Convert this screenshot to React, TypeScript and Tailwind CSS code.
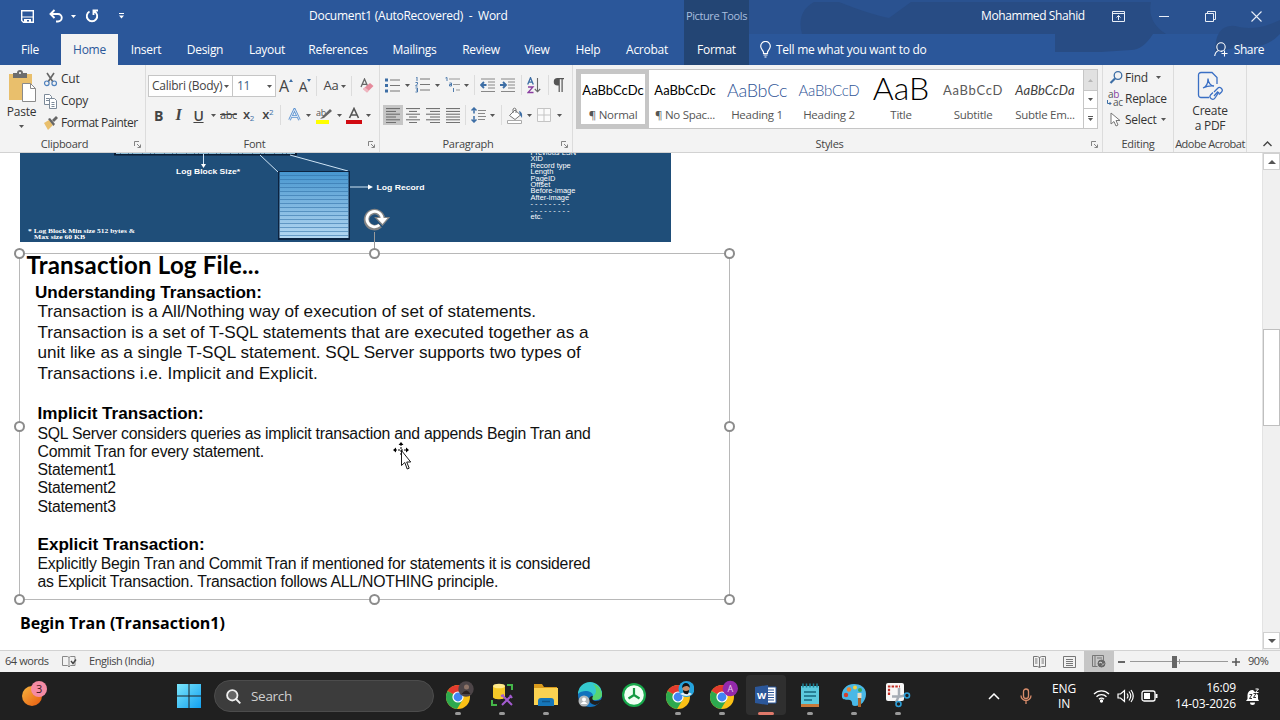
import React from 'react';

const Caret = ({ className = '', fill = '#555' }: { className?: string; fill?: string }) => (
  <svg className={`shrink-0 ${className}`} width="5" height="3" viewBox="0 0 5 3">
    <path d="M0 0h5L2.5 3z" fill={fill} />
  </svg>
);

const Sep = ({ className = '' }: { className?: string }) => (
  <span className={`h-[20px] w-px shrink-0 bg-[#dcdcdc] ${className}`} />
);

const Launcher = () => (
  <svg width="7" height="7" viewBox="0 0 7 7" fill="none" stroke="#777">
    <path d="M.5 5V.5H5M3 3l3 3M6.500 3.500v3h-3" strokeWidth=".9" />
  </svg>
);

const Lines = ({ widths, align = 'left' }: { widths: number[]; align?: 'left' | 'center' | 'right' }) => (
  <svg width="14" height="15" viewBox="0 0 14 15" stroke="#666">
    {widths.map((w, i) => {
      const x = align === 'left' ? 0 : align === 'center' ? (14 - w) / 2 : 14 - w;
      return <path key={i} d={`M${x} ${i * 2.8 + 0.6}h${w}`} />;
    })}
  </svg>
);

function GroupLabel({ children, launcher = true }: { children: React.ReactNode; launcher?: boolean }) {
  return (
    <div className="mt-auto flex h-[16px] w-full items-center text-[11px] text-[#444]">
      <span className="flex-1 text-center whitespace-nowrap">{children}</span>
      {launcher && <span className="flex w-4 justify-center"><Launcher /></span>}
    </div>
  );
}

function TitleBar() {
  return (
    <div className="relative flex h-[34px] items-center pb-[2px] text-[12px] text-white">
      <svg className="ml-[21px]" width="13" height="13" viewBox="0 0 13 13">
        <path d="M.7.700h11.600v11.600H2.500L.7 10.500z" fill="none" stroke="#fff" strokeWidth="1.400" />
        <path d="M1 6.500h11v1H1zM3 9h7v3.500H8V10H6v2.500H3z" fill="#fff" />
      </svg>
      <svg className="ml-[15px]" width="15" height="14" viewBox="0 0 15 14" fill="none" stroke="#fff" strokeWidth="1.900">
        <path d="M1.500 5h7.500a3.700 3.700 0 0 1 0 7.500H7M5.500 1l-4 4 4 4" />
      </svg>
      <Caret className="ml-[7px]" fill="#fff" />
      <svg className="ml-[9px]" width="14" height="14" viewBox="0 0 14 14" fill="none" stroke="#fff" strokeWidth="1.900">
        <path d="M4.500 2.500a5.200 5.200 0 1 0 5 0M8.500 6V1.500H13" />
      </svg>
      <svg className="ml-[20px]" width="5" height="6" viewBox="0 0 5 6" fill="#fff">
        <path d="M0 0h5v1H0zM0 2.500h5L2.500 5.500z" />
      </svg>
      <span className="ml-[185px] w-[375px] whitespace-pre">Document1 (AutoRecovered)  -  Word</span>
      <span className="w-[65px] text-center text-[11px] tracking-[-0.4px] whitespace-nowrap text-[#a9bfdf]">Picture Tools</span>
      <span className="ml-[232px] w-[131px] tracking-[-0.4px] whitespace-nowrap">Mohammed Shahid</span>
      <svg width="13" height="11" viewBox="0 0 13 11" fill="none" stroke="#e8eef7">
        <path d="M.5.500h12v10H.5zM.5 2.500h12M6.500 9V4.500M4.500 6.500l2-2 2 2" />
      </svg>
      <span className="ml-[34px] h-px w-[10px] bg-[#e8eef7]" />
      <svg className="ml-[36px]" width="11" height="11" viewBox="0 0 11 11" fill="none" stroke="#e8eef7">
        <path d="M.5 2.500h8v8h-8zM2.500 2.500v-2h8v8h-2" />
      </svg>
      <svg className="ml-[35px]" width="11" height="11" viewBox="0 0 11 11" fill="none" stroke="#e8eef7" strokeWidth="1.100">
        <path d="M.5.500l10 10M10.500.500l-10 10" />
      </svg>
    </div>
  );
}

function TabBar() {
  return (
    <div className="relative flex h-[31px] items-center text-center text-[12px] text-white">
      <span className="w-[60px]">File</span>
      <span className="ml-px flex h-full w-[57px] items-center justify-center bg-[#f3f3f3] text-[#2b579a]">Home</span>
      <span className="w-[56px]">Insert</span>
      <span className="w-[62px]">Design</span>
      <span className="w-[62px]">Layout</span>
      <span className="w-[80px]">References</span>
      <span className="w-[73px]">Mailings</span>
      <span className="w-[60px]">Review</span>
      <span className="w-[52px]">View</span>
      <span className="w-[50px]">Help</span>
      <span className="w-[68px]">Acrobat</span>
      <span className="ml-[3px] w-[65px]">Format</span>
      <svg className="ml-[11px]" width="11" height="17" viewBox="0 0 11 17" fill="none" stroke="#fff" strokeWidth="1.200">
        <path d="M3.500 12.500V11C3 9.500.7 8 .7 5.200a4.800 4.800 0 0 1 9.600 0C10.300 8 8 9.500 7.500 11v1.500zM3.500 14h4M4.500 16h2" />
      </svg>
      <span className="ml-[5px] whitespace-nowrap">Tell me what you want to do</span>
      <span className="mr-[16px] ml-auto flex items-center gap-[6px] tracking-[-0.4px]">
        <svg width="14" height="15" viewBox="0 0 14 15" fill="none" stroke="#fff" strokeWidth="1.100">
          <circle cx="7" cy="5" r="4.200" />
          <path d="M4.500 8.500C2 9.500 1 11.500.7 14M7 9.500l1.500-.5M10.500 8.500v6M7.500 11.500h6" />
        </svg>
        Share
      </span>
    </div>
  );
}

function Clipboard() {
  return (
    <section className="flex w-[146px] flex-col border-r border-[#dcdcdc]">
      <div className="flex">
        <div className="flex w-[43px] flex-col items-center pt-[5px] text-[12px]">
          <svg width="28" height="33" viewBox="0 0 28 33">
            <path d="M1 4h23v26H1z" fill="#e9bf6c" />
            <path d="M5 3h4a3 3 0 0 1 6 0h4v5H5z" fill="#6d6d6d" />
            <circle cx="12" cy="3" r="1" fill="#fff" />
            <path d="M14.500 13.500h8l5 5v13h-13z" fill="#fff" stroke="#8a8a8a" />
            <path d="M22.500 13.500v5h5" fill="none" stroke="#8a8a8a" />
          </svg>
          <span className="leading-[17px]">Paste</span>
          <Caret className="mt-[5px]" />
        </div>
        <div className="flex flex-col pt-[3px] text-[12px]">
          <div className="flex h-[22px] items-center gap-[3px]">
            <svg width="15" height="15" viewBox="0 0 15 15" fill="none">
              <path d="M4 1l6 9M11 1L5 10" stroke="#666" strokeWidth="1.600" />
              <circle cx="3.800" cy="11.300" r="2.300" stroke="#4f81bd" strokeWidth="1.200" />
              <circle cx="11.200" cy="11.300" r="2.300" stroke="#4f81bd" strokeWidth="1.200" />
            </svg>
            Cut
          </div>
          <div className="flex h-[22px] items-center gap-[3px]">
            <svg width="15" height="15" viewBox="0 0 15 15" fill="#fff" stroke="#7c8a99">
              <path d="M1.500.500h5l2 2v8h-7zM3 4.500h3M3 6.500h3" />
              <path d="M6.500 4.500h5l2 2v8h-7zM8.500 8.500h3M8.500 10.500h3M8.500 12.500h3" />
            </svg>
            Copy
          </div>
          <div className="flex h-[21px] items-center gap-[3px] tracking-[-0.5px] whitespace-nowrap">
            <svg width="15" height="14" viewBox="0 0 15 14">
              <path d="M1 7l5-3 4 5-5 5z" fill="#e9bf6c" />
              <path d="M5 3l2-1 5 6-1.500 2zM9 4l4-4 2 2-4 4z" fill="#666" />
            </svg>
            Format Painter
          </div>
        </div>
      </div>
      <GroupLabel>Clipboard</GroupLabel>
    </section>
  );
}

function FontGroup() {
  return (
    <section className="flex w-[234px] flex-col border-r border-[#dcdcdc] text-[#444]">
      <div className="mt-[10px] flex h-[22px] items-center pl-[2px] text-[12px]">
        <div className="flex h-[22px] w-[85px] items-center justify-between border border-[#c6c6c6] bg-white pr-[3px] pl-[3px] whitespace-nowrap">
          Calibri (Body)
          <Caret />
        </div>
        <div className="flex h-[22px] w-[43px] items-center justify-between border border-l-0 border-[#c6c6c6] bg-white pr-[3px] pl-[4px] text-[#3d6185]">
          11
          <Caret />
        </div>
        <span className="ml-[3px] text-[16px]">A</span>
        <svg className="mb-[11px]" width="4" height="3" viewBox="0 0 4 3"><path d="M0 3h4L2 0z" fill="#3d6ea5" /></svg>
        <span className="ml-[6px] text-[14px]">A</span>
        <svg className="mb-[11px]" width="4" height="3" viewBox="0 0 4 3"><path d="M0 0h4L2 3z" fill="#3d6ea5" /></svg>
        <Sep className="ml-[5px]" />
        <span className="ml-[6px] text-[13px]">Aa</span>
        <Caret className="ml-[3px]" />
        <Sep className="ml-[5px]" />
        <svg className="ml-[8px]" width="14" height="16" viewBox="0 0 14 16">
          <path d="M1 9l3.500-8L8 9M2.300 6.300h4.500" fill="none" stroke="#666" strokeWidth="1.300" />
          <path d="M3 11l7-6 3.500 3-6.500 6.500z" fill="#e58a9b" />
          <path d="M3 11l2-1.500 4 3-2 2z" fill="#f0b7c1" />
        </svg>
      </div>
      <div className="mt-[8px] flex h-[20px] items-center text-[14px]">
        <span className="ml-[7px] w-[11px] text-center font-bold">B</span>
        <span className="ml-[9px] w-[11px] text-center font-['Liberation_Serif'] text-[16px] font-bold italic">I</span>
        <span className="ml-[9px] w-[11px] text-center font-semibold underline">U</span>
        <Caret className="ml-[7px]" />
        <span className="ml-[4px] text-[11px] tracking-[-0.4px] line-through">abc</span>
        <span className="ml-[6px] text-[13px] font-semibold">x<sub className="text-[8px] font-normal text-[#3d6ea5]">2</sub></span>
        <span className="ml-[8px] text-[13px] font-semibold">x<sup className="text-[8px] font-normal text-[#3d6ea5]">2</sup></span>
        <Sep className="ml-[7px]" />
        <svg className="ml-[7px]" width="13" height="14" viewBox="0 0 13 14">
          <path d="M1.500 12L6.500 1.500l5 10.500M3.500 8.500h6" fill="none" stroke="#5b92d0" strokeWidth="2.600" />
          <path d="M1.500 12L6.500 1.500l5 10.500M3.500 8.500h6" fill="none" stroke="#fff" strokeWidth=".8" />
        </svg>
        <Caret className="ml-[5px]" />
        <svg className="ml-[5px]" width="17" height="17" viewBox="0 0 17 17">
          <text x="0" y="8.500" fontSize="9" fill="#555">ab</text>
          <path d="M6 10l8-8 2 2-8 7-4 1z" fill="#666" />
          <path d="M0 13h13v4H0z" fill="#ff0" />
        </svg>
        <Caret className="ml-[4px]" />
        <svg className="ml-[4px]" width="16" height="17" viewBox="0 0 16 17">
          <path d="M3.500 11L8 1.500 12.500 11M5 8h6" fill="none" stroke="#555" strokeWidth="1.600" />
          <path d="M0 13h16v4H0z" fill="#d10a11" />
        </svg>
        <Caret className="ml-[4px]" />
      </div>
      <GroupLabel>Font</GroupLabel>
    </section>
  );
}

function Paragraph() {
  return (
    <section className="flex w-[193px] flex-col border-r border-[#dcdcdc] text-[#444]">
      <div className="mt-[9px] flex h-[22px] items-center">
        <svg className="ml-[5px]" width="16" height="15" viewBox="0 0 16 15">
          <path d="M5 2h10M5 7.500h10M5 13h10" stroke="#777" />
          <path d="M0 .5h3v3H0zM0 6h3v3H0zM0 11.500h3v3H0z" fill="#3d6ea5" />
        </svg>
        <Caret className="ml-[4px]" />
        <svg className="ml-[5px]" width="16" height="16" viewBox="0 0 16 16">
          <path d="M5 2h10M5 7.500h10M5 13h10" stroke="#777" />
          <path d="M1 0h1v4M.5 5.500h2v1.500l-2 2h2M.5 11h2v4h-2M1 13h1.500" fill="none" stroke="#3d6ea5" strokeWidth=".9" />
        </svg>
        <Caret className="ml-[4px]" />
        <svg className="ml-[5px]" width="16" height="16" viewBox="0 0 16 16">
          <path d="M4 2h11M8 7.500h7M11 13h4" stroke="#999" />
          <path d="M.5 1L2 .5V4M4.500 6h2v3h-2V7.500h2M8.500 11v4" fill="none" stroke="#3d6ea5" strokeWidth=".9" />
        </svg>
        <Caret className="ml-[3px]" />
        <Sep className="ml-[5px]" />
        <svg className="ml-[5px]" width="16" height="15" viewBox="0 0 16 15">
          <path d="M1 1h14M8 4h7M8 7h7M8 10h7M1 13.500h14" stroke="#888" />
          <path d="M6.500 7H1.500M4 4L1 7l3 3" fill="none" stroke="#3d6ea5" strokeWidth="1.800" />
        </svg>
        <svg className="ml-[4px]" width="16" height="15" viewBox="0 0 16 15">
          <path d="M1 1h14M8 4h7M8 7h7M8 10h7M1 13.500h14" stroke="#888" />
          <path d="M0 7h5M3 4l3 3-3 3" fill="none" stroke="#3d6ea5" strokeWidth="1.800" />
        </svg>
        <Sep className="ml-[5px]" />
        <svg className="ml-[5px]" width="14" height="17" viewBox="0 0 14 17" fill="none" strokeWidth="1.300">
          <path d="M.7 7.500L3.500.700l2.800 6.800M1.700 5.200h3.600" stroke="#3d6ea5" />
          <path d="M1 10h5l-5 5.500h5.500" stroke="#8a3fa0" />
          <path d="M10.500 1v13.500M7.800 12l2.700 2.800L13.200 12" stroke="#666" strokeWidth="1.100" />
        </svg>
        <Sep className="ml-[7px]" />
        <svg className="ml-[4px]" width="11" height="14" viewBox="0 0 11 14" fill="#555">
          <path d="M4.500 0H11v1.200H9.700V14H8.500V1.200H6.800V14H5.600V7.500H4.500a3.700 3.700 0 0 1 0-7.500z" />
        </svg>
      </div>
      <div className="mt-[9px] flex h-[20px] items-center">
        <span className="ml-[3px] flex h-[20px] w-[20px] items-center justify-center bg-[#c6c6c6]"><Lines widths={[14, 10, 14, 10, 14, 10]} /></span>
        <span className="flex w-[20px] justify-center"><Lines widths={[14, 8, 14, 8, 14, 8]} align="center" /></span>
        <span className="flex w-[20px] justify-center"><Lines widths={[14, 10, 14, 10, 14, 10]} align="right" /></span>
        <span className="flex w-[20px] justify-center"><Lines widths={[14, 14, 14, 14, 14, 14]} /></span>
        <Sep className="ml-[2px]" />
        <svg className="ml-[5px]" width="16" height="16" viewBox="0 0 16 16" fill="none">
          <path d="M7 3.500h8M7 6.500h7M7 9.500h8M7 12.500h7" stroke="#888" />
          <path d="M3 1v5.500M3 9v6M.5 3.500L3 1l2.500 2.500M.5 12.500L3 15l2.500-2.500" stroke="#3d6ea5" strokeWidth="1.500" />
        </svg>
        <Caret className="ml-[3px]" />
        <Sep className="ml-[6px]" />
        <svg className="ml-[5px]" width="17" height="17" viewBox="0 0 17 17">
          <path d="M2.500 8.500L8 3l5.500 5L8 12.500zM6 6V2a2 2 0 0 1 3 0v4" fill="#fff" stroke="#777" />
          <path d="M12 4q4 1 3 7l-2-3z" fill="#3d6ea5" />
          <path d="M.5 13.500h14v3H.5z" fill="#fff" stroke="#aaa" />
        </svg>
        <Caret className="ml-[3px]" />
        <svg className="ml-[5px]" width="15" height="15" viewBox="0 0 15 15" fill="#fafafa" stroke="#c4c4c4">
          <path d="M.5.500h13v13H.5zM7 .5v13M.5 7h13" />
        </svg>
        <Caret className="ml-[5px]" />
      </div>
      <GroupLabel>Paragraph</GroupLabel>
    </section>
  );
}

const styles = [
  { name: '¶ Normal', sample: 'AaBbCcDc', look: "font-['Lato'] text-[13px] text-black tracking-[0px]" },
  { name: '¶ No Spac...', sample: 'AaBbCcDc', look: "font-['Lato'] text-[13px] text-black tracking-[0px]" },
  { name: 'Heading 1', sample: 'AaBbCc', look: "font-['Lato'] font-light text-[18px] text-[#2f5496]" },
  { name: 'Heading 2', sample: 'AaBbCcD', look: "font-['Lato'] font-light text-[15px] text-[#2f5496]" },
  { name: 'Title', sample: 'AaB', look: "font-['Lato'] font-light text-[32px] leading-[26px] text-black pb-[6px] tracking-[0px]" },
  { name: 'Subtitle', sample: 'AaBbCcD', look: "font-['Lato'] text-[13px] text-[#5a5a5a] tracking-[0.7px]" },
  { name: 'Subtle Em...', sample: 'AaBbCcDa', look: "font-['Lato'] italic text-[13px] text-[#404040] tracking-[0.1px]" },
];

function Styles() {
  return (
    <section className="flex w-[530px] flex-col border-r border-[#dcdcdc]">
      <div className="mt-[4px] ml-[3px] flex h-[60px] w-[522px] border border-[#c6c6c6] bg-white">
        {styles.map((s, i) => (
          <div key={s.name} className={`flex w-[72px] shrink-0 flex-col items-center border-4 ${i === 0 ? 'border-[#c6c6c6]' : 'border-transparent'}`}>
            <div className={`flex h-[33px] w-[64px] items-center justify-center whitespace-nowrap ${s.look}`}>{s.sample}</div>
            <div className="-mx-1 text-[11.500px] leading-[16px] whitespace-nowrap text-[#555]">{s.name}</div>
          </div>
        ))}
        <div className="ml-auto flex w-[14px] flex-col border-l border-[#c6c6c6]">
          <span className="flex h-[20px] items-center justify-center bg-[#e1e1e1]"><Caret className="rotate-180" fill="#b5b5b5" /></span>
          <span className="flex h-[19px] items-center justify-center border-y border-[#c6c6c6]"><Caret /></span>
          <span className="flex flex-1 flex-col items-center justify-center gap-px"><span className="h-px w-[5px] bg-[#555]" /><Caret /></span>
        </div>
      </div>
      <GroupLabel>Styles</GroupLabel>
    </section>
  );
}

function Editing() {
  return (
    <section className="flex w-[71px] flex-col border-r border-[#dcdcdc] pt-[2px] text-[12px]">
      <div className="flex h-[21px] items-center pl-[6px]">
        <svg width="14" height="13" viewBox="0 0 14 13" fill="none" stroke="#3d6ea5">
          <circle cx="9" cy="4.500" r="3.800" strokeWidth="1.300" />
          <path d="M6 7.500L1.500 12" strokeWidth="2.200" />
        </svg>
        <span className="ml-[2px]">Find</span>
        <Caret className="ml-[8px]" />
      </div>
      <div className="flex h-[21px] items-center pl-[4px]">
        <div className="relative flex h-[18px] w-[17px] flex-col pl-px text-[10px] leading-[8px] text-[#555]">
          <span>a<span className="text-[#8a3fa0]">b</span></span>
          <span className="pl-[5px]">ac</span>
          <svg className="absolute bottom-[2px] left-0" width="5" height="6" viewBox="0 0 5 6" fill="none" stroke="#3d6ea5">
            <path d="M.5 0v3.500h3.500M2.500 2L4 3.500 2.500 5" />
          </svg>
        </div>
        <span className="ml-px">Replace</span>
      </div>
      <div className="flex h-[21px] items-center pl-[7px]">
        <svg width="12" height="15" viewBox="0 0 12 15" fill="#fff" stroke="#777">
          <path d="M1 1v11l3-2.500L6 14l2-1-2-4.500h4z" />
        </svg>
        <span className="ml-[3px]">Select</span>
        <Caret className="ml-[4px]" />
      </div>
      <GroupLabel launcher={false}>Editing</GroupLabel>
    </section>
  );
}

function Acrobat() {
  return (
    <section className="flex w-[73px] flex-col items-center border-r border-[#dcdcdc] pt-[6px] text-[12px] leading-[15px]">
      <svg width="27" height="30" viewBox="0 0 27 30" fill="none" stroke="#3a6fc4" strokeWidth="1.300">
        <path d="M12 26.500H4a2.500 2.500 0 0 1-2.500-2.500V4A2.500 2.500 0 0 1 4 1.500h11l5 5V13" />
        <path d="M6 17c3-1 5-5 5-9.500 0 4.500 3 7.500 6 7.500-4-.5-8 .5-11 2z" />
        <path d="M17 21l3.500-3.500a2.600 2.600 0 0 1 4 3.500L22 23.500M22 21l-4 6a2.600 2.600 0 0 1-4.500-3l2.500-2.500M17 25l4-4.500" />
      </svg>
      <span className="mt-[2px]">Create</span>
      <span>a PDF</span>
      <span className="mt-auto flex h-[17px] items-center text-[11px] tracking-[-0.5px] whitespace-nowrap text-[#444]">Adobe Acrobat</span>
    </section>
  );
}

function Ribbon() {
  return (
    <div className="flex h-[88px] border-b border-[#d2d2d2] bg-[#f3f3f3] text-[#333]">
      <Clipboard />
      <FontGroup />
      <Paragraph />
      <Styles />
      <Editing />
      <Acrobat />
      <svg className="mt-auto mb-[5px] ml-[16px]" width="9" height="6" viewBox="0 0 9 6" fill="none" stroke="#444" strokeWidth="1.400">
        <path d="M.5 5l4-4 4 4" />
      </svg>
    </div>
  );
}

const recordFields = ['Previous LSN', 'XID', 'Record type', 'Length', 'PageID', 'Offset', 'Before-image', 'After-image', '- - - - - - - - -', '- - - - - - - - -', 'etc.'];

function LogDiagram() {
  return (
    <svg className="ml-[20px] block shrink-0 bg-[#1f4e79] tracking-normal" width="651" height="89" viewBox="20 153 651 89" fontFamily="Liberation Sans" fill="#fff">
      <path d="M114 150h183v5.500H114z" fill="#0b1c33" />
      <path d="M116 150h179v4H116z" fill="#8fc1dc" />
      <path d="M120 153h170" stroke="#1d3d60" strokeDasharray="1 7 1 3 1 9" />
      <path d="M203.500 154v12M260 155l18 17M290 155l58 16M349 187h20" stroke="#cfe4f5" fill="none" />
      <path d="M201 164h5l-2.500 4zM368 184.500v5l5-2.500z" />
      <path d="M278 171h72v69h-72z" fill="#0c2340" />
      <linearGradient id="record" x1="0" y1="0" x2="0" y2="1">
        <stop offset="0" stopColor="#4796cf" />
        <stop offset="1" stopColor="#b5d8f2" />
      </linearGradient>
      <path d="M279.500 172h69v66h-69z" fill="url(#record)" />
      {Array.from({ length: 16 }, (_, i) => (
        <path key={i} d={`M279.500 ${175.5 + i * 4}h69`} stroke="#2f6fa6" opacity=".55" />
      ))}
      <text x="176" y="174" fontSize="7" fontWeight="bold" textLength="64" lengthAdjust="spacingAndGlyphs">Log Block Size*</text>
      <text x="376.500" y="189.500" fontSize="7" fontWeight="bold" textLength="48" lengthAdjust="spacingAndGlyphs">Log Record</text>
      <g fontFamily="Liberation Serif" fontSize="6.500" fontWeight="bold">
        <text x="28" y="233" textLength="107" lengthAdjust="spacingAndGlyphs">* Log Block Min size 512 bytes &amp;</text>
        <text x="34" y="239" textLength="51" lengthAdjust="spacingAndGlyphs">Max size 60 KB</text>
      </g>
      <g fontSize="6.500" transform="translate(530.500 155) scale(1.15 1)">
        {recordFields.map((f, i) => (
          <text key={i} x="0" y={i * 6.4}>{f}</text>
        ))}
      </g>
    </svg>
  );
}

const handles = [
  'left-[-6px] top-[-6px]', 'left-[349px] top-[-6px]', 'left-[704px] top-[-6px]',
  'left-[-6px] top-[167px]', 'left-[704px] top-[167px]',
  'left-[-6px] top-[340px]', 'left-[349px] top-[340px]', 'left-[704px] top-[340px]',
];

function SelectedPicture() {
  return (
    <div className="relative mt-[11px] ml-[19px] h-[347px] w-[711px] border border-[#b8b8b8] pl-[17.500px] font-['Liberation_Sans'] tracking-normal whitespace-nowrap text-[#111]">
      <h1 className="-ml-[11px] h-[29px] font-['Lato'] text-[24px] leading-[21px] font-bold tracking-[0.200px] text-black">Transaction Log File...</h1>
      <h2 className="-ml-[2.500px] text-[17.100px] leading-[19px] font-bold text-black">Understanding Transaction:</h2>
      <div className="-mt-px text-[17.150px] leading-[20.500px]">
        <p>Transaction is a All/Nothing way of execution of set of statements.</p>
        <p>Transaction is a set of T-SQL statements that are executed together as a</p>
        <p>unit like as a single T-SQL statement. SQL Server supports two types of</p>
        <p>Transactions i.e. Implicit and Explicit.</p>
      </div>
      <h2 className="mt-[21px] text-[17.100px] leading-[20px] font-bold text-black">Implicit Transaction:</h2>
      <div className="mt-[0.500px] text-[15.800px] leading-[18.300px] tracking-[-0.250px]">
        <p>SQL Server considers queries as implicit transaction and appends Begin Tran and</p>
        <p>Commit Tran for every statement.</p>
        <p>Statement1</p>
        <p>Statement2</p>
        <p>Statement3</p>
      </div>
      <h2 className="mt-[19px] text-[17.100px] leading-[20px] font-bold text-black">Explicit Transaction:</h2>
      <div className="text-[15.800px] leading-[18.300px] tracking-[-0.240px]">
        <p>Explicitly Begin Tran and Commit Tran if mentioned for statements it is considered</p>
        <p>as Explicit Transaction. Transaction follows ALL/NOTHING principle.</p>
      </div>

      <span className="absolute top-[-22px] left-[354px] h-[18px] w-px bg-[#9a9a9a]" />
      {handles.map((pos) => (
        <span key={pos} className={`absolute h-[11px] w-[11px] rounded-full border-2 border-[#8c8c8c] bg-white ${pos}`} />
      ))}
      <svg className="absolute top-[-47px] left-[343px]" width="27" height="24" viewBox="0 0 27 24" fill="none">
        <path d="M17 18.500a8 8 0 1 1 2.500-7" stroke="#858585" strokeWidth="5.500" />
        <path d="M12.500 10.500h13.500l-6.500 7.500z" fill="#fff" stroke="#858585" strokeWidth="1.200" />
        <path d="M16.500 18a7.700 7.700 0 1 1 2.800-6" stroke="#fff" strokeWidth="2.800" />
      </svg>
      <svg className="absolute top-[188px] left-[372px]" width="20" height="30" viewBox="0 0 20 30">
        <path d="M9 2v12M3 8h12" stroke="#000" strokeDasharray="2 1" />
        <path d="M9 0l2.500 3h-5zM1 8l3-2.500v5zM17 8l-3-2.500v5z" />
        <path d="M9.500 8.500v15l3.300-3 2.400 6.500 2-.8-2.500-6.200h4z" fill="#fff" stroke="#000" strokeWidth=".9" />
      </svg>
    </div>
  );
}

function ScrollBar() {
  return (
    <div className="flex w-[18px] flex-col border-l border-[#e3e3e3] bg-[#f0f0f0]">
      <span className="flex h-[17px] items-center justify-center border border-[#d0d0d0] bg-white">
        <svg width="8" height="4" viewBox="0 0 8 4" fill="#555"><path d="M0 4h8L4 0z" /></svg>
      </span>
      <span className="mt-[159px] h-[97px] border border-[#bfbfbf] bg-white" />
      <span className="mt-auto mb-px flex h-[17px] items-center justify-center border border-[#d0d0d0] bg-white">
        <svg width="8" height="4" viewBox="0 0 8 4" fill="#555"><path d="M0 0h8L4 4z" /></svg>
      </span>
    </div>
  );
}

function StatusBar() {
  return (
    <div className="flex h-[22px] items-center border-t border-[#d2d2d2] bg-[#f2f2f2] text-[11px] tracking-[-0.42px] whitespace-nowrap text-[#444]">
      <span className="ml-[5px] w-[57px]">64 words</span>
      <svg width="15" height="13" viewBox="0 0 15 13" fill="none" stroke="#888">
        <path d="M.5 1.500h5l1.500 1 1.500-1H13v9H8.500L7 12l-1.500-1.500h-5zM7 2.500V12" />
        <path d="M9 6l2 2.500 3-4" stroke="#444" strokeWidth="1.400" />
      </svg>
      <span className="ml-[12px]">English (India)</span>
      <svg className="ml-auto" width="13" height="12" viewBox="0 0 13 12" fill="none" stroke="#777">
        <path d="M.5.500h4l2 1 2-1h4v10h-4l-2 1-2-1h-4zM6.500 1.500v10M2 3h2.500M2 5h2.500M2 7h2.500M8.500 3H11M8.500 5H11M8.500 7H11" />
      </svg>
      <svg className="ml-[17px]" width="13" height="12" viewBox="0 0 13 12" fill="none" stroke="#777">
        <path d="M.5.500h12v11H.5zM3 3.500h7M3 5.500h7M3 7.500h7M3 9.500h7" />
      </svg>
      <span className="ml-[8px] flex h-full w-[30px] items-center justify-center bg-[#c6c6c6]">
        <svg width="14" height="13" viewBox="0 0 14 13" fill="none" stroke="#777">
          <path d="M11.500 5V.500H.5v11h5M3 .5v11M5 3h5" />
          <circle cx="9.500" cy="8.500" r="3.500" fill="#666" stroke="#666" />
          <path d="M7 8l2-1 1 1.500M10 10.500l2-2" stroke="#ddd" />
        </svg>
      </span>
      <span className="ml-[4px] h-[2px] w-[7px] bg-[#666]" />
      <span className="ml-[5px] flex w-[98px] items-center">
        <span className="h-px w-[42px] bg-[#999]" />
        <span className="h-[12px] w-[5px] bg-[#666]" />
        <span className="h-px w-[2px] bg-[#999]" />
        <span className="h-[5px] w-px bg-[#999]" />
        <span className="h-px flex-1 bg-[#999]" />
      </span>
      <svg className="ml-[4px]" width="8" height="8" viewBox="0 0 8 8" stroke="#555" strokeWidth="1.500"><path d="M4 0v8M0 4h8" /></svg>
      <span className="mr-[11px] ml-[8px] w-[21px]">90%</span>
    </div>
  );
}

function Chrome({ badge }: { badge: React.ReactNode }) {
  return (
    <svg width="32" height="30" viewBox="-1.500 0 32 30">
      <circle cx="14.500" cy="17" r="12" fill="#fbc116" />
      <path d="M14.500 17L4.100 11A12 12 0 0 1 24.900 11z" fill="#e33b2e" />
      <path d="M14.500 17L4.100 11A12 12 0 0 0 13.500 29l5.500-9z" fill="#2da94f" />
      <circle cx="14.500" cy="17" r="5.600" fill="#fff" />
      <circle cx="14.500" cy="17" r="4.400" fill="#4285f4" />
      {badge}
    </svg>
  );
}

const apps = [
  {
    id: 'chrome-photo',
    icon: (
      <Chrome badge={<g><circle cx="22.500" cy="9" r="7.700" fill="#4d4548" /><circle cx="23" cy="7" r="2.500" fill="#8e7468" /><path d="M18 14q5-7 9 0z" fill="#2a2022" /></g>} />
    ),
  },
  {
    id: 'ssms',
    icon: (
      <svg width="26" height="26" viewBox="0 0 26 26" fill="none">
        <path d="M4 4v11c0 3 12 3 12 0V4z" fill="#f5c928" />
        <ellipse cx="10" cy="4" rx="6" ry="2.300" fill="#ffe98a" />
        <path d="M18 3h5v5M3 18v5h5" stroke="#45b649" strokeWidth="2" />
        <path d="M14 14l9 9M22 14l-9 9M12 14l3-1M21 13l2 3" stroke="#a35bd0" strokeWidth="2" />
      </svg>
    ),
  },
  {
    id: 'explorer',
    icon: (
      <svg width="26" height="24" viewBox="0 0 26 24">
        <path d="M1 1h8l2 3h13v8H1z" fill="#d99a1c" />
        <path d="M1 5h24v17H1z" fill="#fbd251" />
        <path d="M5 23v-5a3 3 0 0 1 3-3h10a3 3 0 0 1 3 3v5z" fill="#1676b9" />
        <path d="M9 18.500h8" stroke="#0f558a" strokeWidth="1.500" />
      </svg>
    ),
  },
  {
    id: 'edge',
    icon: (
      <svg width="26" height="26" viewBox="0 0 26 26">
        <circle cx="13" cy="13" r="12" fill="#1272bd" />
        <path d="M1 12A12 12 0 0 1 25 12c0 5-4 6-8 6-3 0-2-2-1-4 0-5-10-7-15-2z" fill="#35c9cf" />
        <path d="M16 2a12 12 0 0 1 9 10c0 5-4 6-8 6-3 0-2-2-1-4 4-2 4-8 0-12z" fill="#58d46f" />
        <path d="M25 17c-4 3-12 3-9-3-6 0-5 8 2 9q5-1 7-6z" fill="#202020" />
        <circle cx="7" cy="19" r="5.500" fill="#b4b8bb" />
        <circle cx="7" cy="17.500" r="2" fill="#fff" />
        <path d="M3.500 22q3.500-5 7 0z" fill="#fff" />
      </svg>
    ),
  },
  {
    id: 'clockify',
    icon: (
      <svg width="26" height="26" viewBox="0 0 26 26">
        <circle cx="13" cy="13" r="12" fill="#17a84b" />
        <circle cx="13" cy="13" r="9.800" fill="#effff3" />
        <path d="M13 6v7.500M13 13l-5.500 3.500M13 13l5.500 3.500" stroke="#159a43" strokeWidth="2.200" />
      </svg>
    ),
  },
  {
    id: 'chrome-man',
    icon: (
      <Chrome badge={<g><circle cx="23" cy="9" r="8" fill="#25a3dd" /><path d="M16.500 14q6-4 12 0-5 4-12 0z" fill="#e5eef5" /><circle cx="22.500" cy="8.500" r="3.500" fill="#c78b68" /><path d="M18.500 8c0-7 8-6 8 0-3-3-5-2-8 0zM19.500 10q3 2 6 0 0 5-3 4-3 0-3-4z" fill="#141414" /></g>} />
    ),
  },
  {
    id: 'chrome-a',
    icon: (
      <Chrome badge={<g><circle cx="22.800" cy="8.500" r="7.700" fill="#9329ab" /><text x="22.800" y="12" textAnchor="middle" fontSize="9" fill="#e9cdef">A</text></g>} />
    ),
  },
  {
    id: 'word',
    icon: (
      <svg width="22" height="22" viewBox="0 0 22 22">
        <path d="M11 3h10v16H11z" fill="#fff" stroke="#2b579a" />
        <path d="M13 6h6M13 8.500h6M13 11h6M13 13.500h6M13 16h6" stroke="#2b579a" />
        <path d="M0 3l13-2v20L0 19z" fill="#2b579a" />
        <text x="6.500" y="14.500" textAnchor="middle" fontSize="9.500" fontWeight="bold" fill="#fff">W</text>
      </svg>
    ),
  },
  {
    id: 'notepad',
    icon: (
      <svg width="22" height="26" viewBox="0 0 22 26">
        <path d="M2 4h18v20H2z" fill="#5cc9dd" />
        <path d="M2 22h18v3H2z" fill="#c8793a" />
        <path d="M5 10h12M5 14h12M5 18h8" stroke="#17677d" strokeWidth="1.500" />
        <path d="M4 1.500v4M7.500 1.500v4M11 1.500v4M14.500 1.500v4M18 1.500v4" stroke="#1d8398" strokeWidth="1.500" />
      </svg>
    ),
  },
  {
    id: 'paint',
    icon: (
      <svg width="26" height="26" viewBox="0 0 26 26">
        <path d="M13 2C5 2 0 8 1 15c1 4 5 2 8 3 4 2 0 6 5 6 6 0 11-5 11-12S19 2 13 2z" fill="#49b8e6" />
        <circle cx="5" cy="13" r="2.200" fill="#d33f2c" />
        <circle cx="8" cy="7.500" r="2.200" fill="#f0802e" />
        <circle cx="14" cy="5.500" r="2" fill="#f6d13f" />
        <circle cx="19" cy="8" r="2" fill="#3aa655" />
        <path d="M16.500 11h4v5h-4z" fill="#eadcc4" />
        <path d="M17 16h3v9h-3z" fill="#a8642b" />
      </svg>
    ),
  },
  {
    id: 'snip',
    icon: (
      <svg width="26" height="26" viewBox="0 0 26 26" fill="none">
        <rect x="1" y="1" width="18" height="18" rx="2" fill="#f7f7f7" />
        <path d="M4 13V4.500h11" stroke="#c22e25" strokeWidth="2.200" strokeDasharray="2.500 1.200" />
        <path d="M14 6v8l-3 6M7 14.500h8l5-1" stroke="#a6adb5" strokeWidth="2.500" />
        <circle cx="22" cy="13.500" r="2.500" stroke="#2d9fd8" strokeWidth="1.600" />
        <circle cx="13.500" cy="22" r="2.500" stroke="#2d9fd8" strokeWidth="1.600" />
      </svg>
    ),
  },
];

function TaskBar() {
  return (
    <div className="flex h-[48px] items-center bg-[#202020] text-[12px] tracking-[-0.15px] text-white">
      <svg className="ml-[21px]" width="27" height="30" viewBox="0 0 27 30">
        <linearGradient id="sun" x1="0" y1="0" x2="1" y2="1">
          <stop offset="0" stopColor="#f8b63f" />
          <stop offset="1" stopColor="#e6590f" />
        </linearGradient>
        <circle cx="11" cy="15" r="10" fill="url(#sun)" />
        <circle cx="18" cy="8" r="8" fill="#f48ba4" />
        <text x="18" y="12" textAnchor="middle" fontSize="11" fill="#3a1520">3</text>
      </svg>
      <svg className="ml-[129px]" width="24" height="24" viewBox="0 0 24 24">
        <linearGradient id="win" x1="0" y1="0" x2="1" y2="1">
          <stop offset="0" stopColor="#7be6fb" />
          <stop offset="1" stopColor="#12a0f0" />
        </linearGradient>
        <path d="M0 0h11.500v11.500H0zM12.500 0H24v11.500H12.500zM0 12.500h11.500V24H0zM12.500 12.500H24V24H12.500z" fill="url(#win)" />
      </svg>
      <div className="ml-[13px] flex h-[32px] w-[220px] items-center rounded-full border border-[#4c4c4c] bg-[#3c3c3c] text-[13.500px] tracking-[-0.3px] text-[#d0d0d0]">
        <svg className="ml-[11px]" width="15" height="15" viewBox="0 0 15 15" fill="#666" stroke="#f0f0f0" strokeWidth="1.800">
          <circle cx="6.300" cy="6.300" r="5.200" />
          <path d="M10 10l4.300 4.300" />
        </svg>
        <span className="ml-[10px]">Search</span>
      </div>
      <div className="ml-[2px] flex h-full items-center">
        {apps.map((app) => (
          <div key={app.id} className="flex h-full w-[44px] flex-col items-center">
            <span className={`mt-[3px] flex h-[40px] w-[40px] items-center justify-center rounded ${app.id === 'word' ? 'bg-[#2f2f2f]' : ''}`}>{app.icon}</span>
            {app.id === 'word' ? (
              <span className="-mt-[3px] h-[3px] w-[16px] rounded-full bg-[#e0796a]" />
            ) : (
              <span className={`-mt-[3px] h-[3px] w-[6px] rounded-full ${app.id === 'edge' || app.id === 'clockify' ? '' : 'bg-[#999]'}`} />
            )}
          </div>
        ))}
      </div>
      <svg className="ml-auto" width="12" height="7" viewBox="0 0 12 7" fill="none" stroke="#fff" strokeWidth="1.500">
        <path d="M1 6l5-5 5 5" />
      </svg>
      <svg className="ml-[20px]" width="12" height="17" viewBox="0 0 12 17" fill="none" stroke="#d98d6b" strokeWidth="1.300">
        <rect x="3.500" y="1" width="5" height="9.500" rx="2.500" />
        <path d="M1 7.500a5 5 0 0 0 10 0M6 12.500V16" />
      </svg>
      <span className="ml-[17px] w-[30px] text-center leading-[15px]">ENG<br />IN</span>
      <svg className="ml-[14px]" width="17" height="14" viewBox="0 0 17 14" fill="none" stroke="#fff" strokeWidth="1.300">
        <path d="M1 5a10.500 10.500 0 0 1 15 0M3.500 7.700a7 7 0 0 1 10 0M6 10.200a3.500 3.500 0 0 1 5 0" />
        <circle cx="8.500" cy="12" r="1" fill="#fff" />
      </svg>
      <svg className="ml-[7px]" width="17" height="14" viewBox="0 0 17 14" fill="none" stroke="#fff" strokeWidth="1.200">
        <path d="M1 5v4h2.500l4 3.500v-11L3.500 5zM10 4.500q2 2.500 0 5M12 2.500q3.500 4.500 0 9M14 1q4.500 6 0 12" />
      </svg>
      <svg className="ml-[7px]" width="17" height="12" viewBox="0 0 17 12" fill="none" stroke="#fff" strokeWidth="1.300">
        <rect x="1" y="1" width="13" height="10" rx="2" />
        <path d="M3 3h6v6H3z" fill="#fff" stroke="none" />
        <path d="M15.500 4v4" strokeWidth="2" />
      </svg>
      <span className="ml-[10px] w-[68px] text-right leading-[16px] whitespace-nowrap">16:09<br />14-03-2026</span>
      <svg className="mr-[20px] ml-[9px]" width="15" height="17" viewBox="0 0 15 17">
        <path d="M1 13l1.500-2V7A5 5 0 0 1 8 2l5 5v4l1 2zM5 14.500h5a2.500 2.500 0 0 1-5 0z" fill="#fff" />
        <path d="M4.500 6.500h2.500l-2.500 4h2.500M8.500 5.500h2.500l-2.500 4h2.500" fill="none" stroke="#202020" strokeWidth=".9" />
        <path d="M10.500 1h3l-3 3.500h3" fill="none" stroke="#fff" />
      </svg>
    </div>
  );
}

export default function App() {
  return (
    <div className="flex h-[720px] w-[1280px] flex-col overflow-hidden bg-white font-['Open_Sans',sans-serif] tracking-[-0.27px]">
      <header className="relative bg-[#2b579a]">
        <svg className="absolute top-0 left-0" width="1280" height="65" viewBox="0 0 1280 65">
          <path d="M684 0h65v65h-65z" fill="#234574" />
          <path d="M749 0h531v34H749z" fill="#2a5290" />
          <path d="M802 34q-6-22 12-32h25q30 12 50 16l22-16h240q-4 20 15 32z" fill="#284c84" />
          <path d="M1055 34h98q-10 16-22 16l-30 2h-46z" fill="#284c84" />
          <path d="M1215 52q0-28 20-26 20 6 45-6v14q-15 16-36 12z" fill="#284c84" />
        </svg>
        <TitleBar />
        <TabBar />
      </header>
      <Ribbon />
      <main className="flex h-[497px] bg-white">
        <div className="flex flex-1 flex-col">
          <LogDiagram />
          <SelectedPicture />
          <p className="mt-[12px] ml-[20px] text-[16px] leading-[22px] font-bold tracking-[0.020px] text-black">Begin Tran (Transaction1)</p>
        </div>
        <ScrollBar />
      </main>
      <StatusBar />
      <TaskBar />
    </div>
  );
}
